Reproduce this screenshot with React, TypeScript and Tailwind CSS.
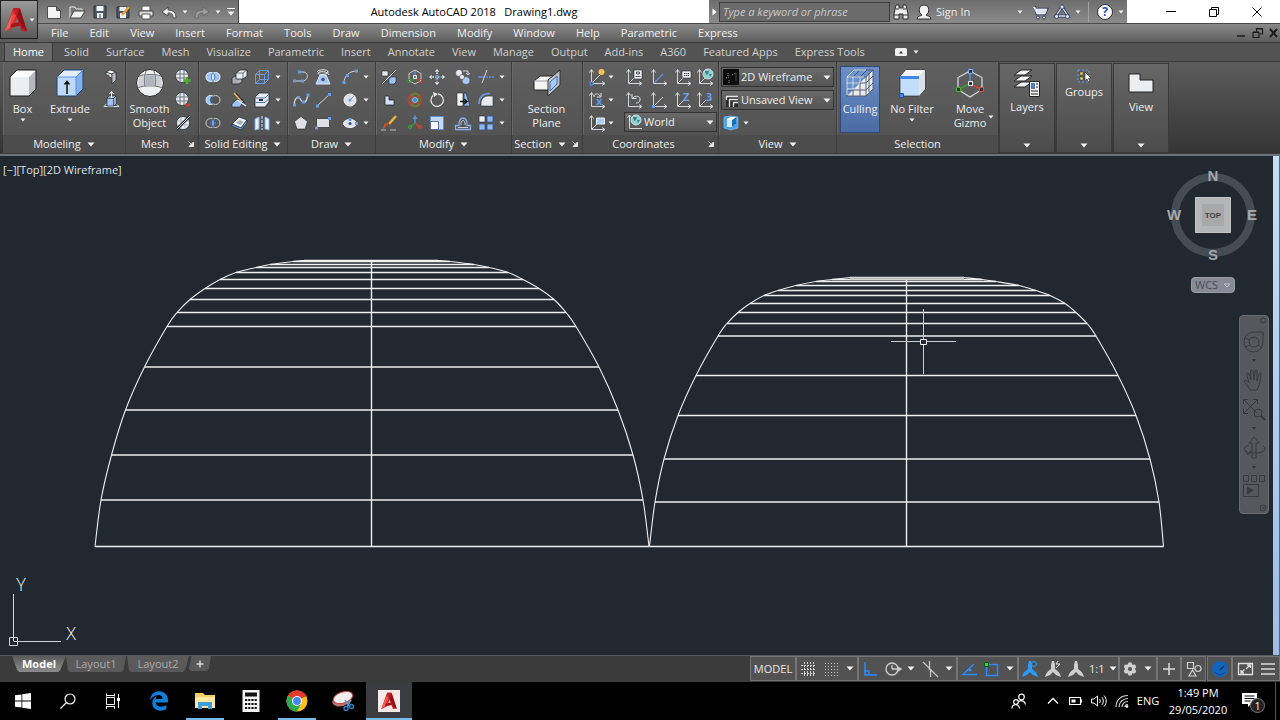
import React from 'react';
import clsx from 'clsx';
import { FaEdgeLegacy } from 'react-icons/fa6';
import { Settings } from 'lucide-react';

const MENUS = ['File', 'Edit', 'View', 'Insert', 'Format', 'Tools', 'Draw', 'Dimension', 'Modify', 'Window', 'Help', 'Parametric', 'Express'];

const TABS = ['Solid', 'Surface', 'Mesh', 'Visualize', 'Parametric', 'Insert', 'Annotate', 'View', 'Manage', 'Output', 'Add-ins', 'A360', 'Featured Apps', 'Express Tools'];

const LIGHT = '#e8ebf0';
const BLUE = '#9cc3f5';
const INK = '#222a35';
const AXIS = '#d2d5da';

interface SvgProps {
  w?: number;
  h?: number;
  children: React.ReactNode;
}

const Svg: React.FC<SvgProps> = ({ w = 20, h = 20, children }) => (
  <svg width={w} height={h} viewBox={`0 0 ${w} ${h}`} fill="none" className="block shrink-0" aria-hidden="true">
    {children}
  </svg>
);

const Caret: React.FC<{ size?: 'sm' | 'md' }> = ({ size = 'sm' }) =>
  size === 'sm' ? (
    <Svg w={6} h={4}>
      <path d="M0.5 0.5h5L3 3.5z" fill="#f2f2f2" />
    </Svg>
  ) : (
    <Svg w={8} h={5}>
      <path d="M0.5 0.5h7L4 4.5z" fill="#f2f2f2" />
    </Svg>
  );

const ucsAxes = <path d="M4.500 3v13.500h13M2.500 5.500l2-3 2 3M15 14.500l3 2-3 2" stroke={AXIS} />;

const globe = (cx: number, cy: number) => (
  <>
    <circle cx={cx} cy={cy} r="5" fill="#8fd0d6" stroke="#d8eef2" strokeWidth="0.800" />
    <path d={`M${cx - 3} ${cy - 3}l4 0-1 3-2 1zM${cx + 1} ${cy}l3 0-2 3z`} fill="#3f7f86" />
  </>
);

// small ribbon icons, drawn on a 20px grid
const icons: Record<string, React.ReactNode> = {
  polysolid: (
    <>
      <path d="M5 5l6 2v4l-3-1V8.500L5 7.500z" fill={LIGHT} stroke={INK} strokeWidth="0.700" />
      <path d="M5 5l4-2 6 2-4 2z" fill="#fff" stroke={INK} strokeWidth="0.700" />
      <path d="M11 7l4-2v8l-4 4z" fill="#b9bec6" stroke={INK} strokeWidth="0.700" />
    </>
  ),
  presspull: (
    <>
      <path d="M3 16.500h15l-2-2M3 16.500l3-3" stroke="#dfe5ee" />
      <path d="M6 8h7v8H6z" fill={BLUE} stroke={INK} strokeWidth="0.700" />
      <path d="M6 8l2-2h7l-2 2zM13 8l2-2v8l-2 2z" fill="#d8e8fb" stroke={INK} strokeWidth="0.700" />
      <path d="M10.500 8V2M8.500 4l2-2.500 2 2.500" stroke="#fff" />
    </>
  ),
  meshMore: (
    <>
      <circle cx="9" cy="9" r="6.500" fill={LIGHT} stroke={INK} strokeWidth="0.700" />
      <path d="M3 7h12M3 11h12M7 3v12M11 3v12" stroke="#6d7480" />
      <path d="M14 10v7M10.500 13.500h7" stroke="#4cae2c" strokeWidth="2.500" />
    </>
  ),
  meshLess: (
    <>
      <circle cx="9" cy="9" r="6.500" fill={LIGHT} stroke={INK} strokeWidth="0.700" />
      <path d="M3 7h12M3 11h12M7 3v12M11 3v12" stroke="#6d7480" />
      <path d="M12 15h5" stroke="#d9382a" strokeWidth="2.500" />
    </>
  ),
  meshRefine: (
    <>
      <circle cx="10" cy="10" r="6.500" fill={LIGHT} stroke={INK} strokeWidth="0.700" />
      <path d="M4 8h12M4 12h12M8 4v12M12 4v12" stroke="#b0b5bc" />
      <path d="M4 16L17 3" stroke={INK} strokeWidth="2.500" />
      <path d="M4 16L17 3" stroke="#d5d8dc" />
    </>
  ),
  union: (
    <>
      <circle cx="7.500" cy="10" r="4.500" fill={BLUE} stroke="#eef4ff" />
      <circle cx="12.500" cy="10" r="4.500" fill={BLUE} stroke="#eef4ff" />
      <ellipse cx="10" cy="10" rx="1.800" ry="3.500" fill="#d5e6fd" stroke="#4a79c4" />
    </>
  ),
  subtract: (
    <>
      <circle cx="7.500" cy="10" r="4.500" fill={BLUE} stroke="#dfeaff" />
      <circle cx="12.500" cy="10" r="4.500" fill="#555" stroke="#c8cbd0" />
      <path d="M9.500 6.500a4.500 4.500 0 0 0 0 7" stroke="#2d4d86" strokeWidth="1.500" />
    </>
  ),
  intersect: (
    <>
      <circle cx="7.500" cy="10" r="4.500" stroke="#c8cbd0" />
      <circle cx="12.500" cy="10" r="4.500" stroke="#c8cbd0" />
      <ellipse cx="10" cy="10" rx="2" ry="3.500" fill="#6ea6ee" stroke="#2d4d86" />
    </>
  ),
  extrudeFaces: (
    <>
      <path d="M3 11l3-2h7v6l-3 2H3z" fill="#a9adb4" stroke={INK} strokeWidth="0.800" />
      <path d="M7 6l4-3h7v6l-4 3H7z" fill={LIGHT} stroke={INK} strokeWidth="0.800" />
      <path d="M7 6h7v6M14 6l4-3" stroke={INK} strokeWidth="0.600" />
    </>
  ),
  slice: (
    <>
      <path d="M3 14l4-4h8l-4 7H3z" fill={BLUE} stroke={INK} strokeWidth="0.600" />
      <path d="M8 10l9 6" stroke="#dbe8fa" strokeWidth="1.500" />
      <path d="M5 3l7 8" stroke="#e5b65c" strokeWidth="1.500" />
      <path d="M7 3l9 10" stroke="#2c2c2c" />
    </>
  ),
  thicken: (
    <>
      <path d="M3 11l7-7 8 3-6 8z" fill="#f1f5fb" stroke={INK} strokeWidth="0.700" />
      <path d="M3 11l9 4 6-8v3l-6 7-9-4z" fill="#6ea6ee" stroke={INK} strokeWidth="0.700" />
      <path d="M7 10l3.500-3 4 1.500-3 3.500z" fill="#a5abb4" />
    </>
  ),
  extractEdges: (
    <path d="M3.500 7.500h9v9h-9zM3.500 7.500l4-4h9v9l-4 4M12.500 7.500l4-4M7.500 3.500v9h9M7.500 12.500l-4 4" stroke="#6c9be6" />
  ),
  imprint: (
    <>
      <path d="M3 7l4-4h10v9l-4 5H3z" fill={LIGHT} stroke={INK} strokeWidth="0.800" />
      <path d="M3 8h10l4-4M4 12.500h9l4-4" stroke="#4672bb" />
      <path d="M7 9h4v2H7z" fill={INK} />
    </>
  ),
  separate: (
    <>
      <path d="M3 6l4-2v12l-4 1zM13 4l4 2v11l-4-1z" fill="#e9f2ff" stroke="#7fadf0" />
      <path d="M10 3v14" stroke="#e4e4e4" strokeDasharray="3 1" />
    </>
  ),
  polyline: (
    <>
      <path d="M3 14h8c7 0 7-9 1-9H8" stroke={AXIS} />
      <path d="M2 12.500h3v3H2zM10 12.500h3v3h-3zM7 3.500h3v3H7z" fill="#6c9be6" />
    </>
  ),
  helix: (
    <>
      <path d="M4 5c1-3 11-3 11 0s-11 3-10 1 10-2 11 2" stroke="#e5e7ea" />
      <path d="M7 8h6l4 9H3z" fill="#a9c9f2" stroke="#dbe8fa" />
      <circle cx="10" cy="12.500" r="1.800" fill="#33598f" />
    </>
  ),
  arc: (
    <>
      <path d="M4 16C4 9 9 4 17 4" stroke={AXIS} />
      <path d="M2.500 14h3v3h-3zM6 7h3v3H6zM15 2.500h3v3h-3z" fill="#6c9be6" />
    </>
  ),
  spline: (
    <>
      <path d="M3 15C4 6 8 6 10 10s5 4 7-5" stroke={AXIS} strokeWidth="1.300" />
      <path d="M2 13.500h3v3H2zM6 6h3v3H6zM11 10.500h3v3h-3zM15.500 3.500h3v3h-3z" fill="#6c9be6" />
    </>
  ),
  line: (
    <>
      <path d="M4 16L17 4" stroke={AXIS} />
      <path d="M3 14.500h3v3H3zM15 3h3v3h-3z" fill="#6c9be6" />
    </>
  ),
  circle: (
    <>
      <circle cx="10" cy="10" r="6" fill="#dde0e5" stroke="#f6f7f9" />
      <path d="M10 10l4-4" stroke="#6c9be6" />
      <circle cx="10" cy="10" r="1.500" fill="#6c9be6" />
    </>
  ),
  polygon: <path d="M10 3.500l6.500 5-2.500 7.500H6L3.500 8.500z" fill="#dde0e5" stroke="#2a2a2a" strokeWidth="0.600" />,
  rectangle: (
    <>
      <path d="M3.500 5.500h13v9h-13z" fill="#dde0e5" stroke="#2a2a2a" strokeWidth="0.700" />
      <path d="M2 13.500h3v3H2zM15 4h3v3h-3z" fill="#6c9be6" />
    </>
  ),
  ellipse: (
    <>
      <ellipse cx="10" cy="10.500" rx="6.500" ry="4" fill="#dde0e5" stroke="#f6f7f9" />
      <circle cx="10" cy="10.500" r="1.500" fill="#2b4f8f" />
      <path d="M8.500 5h3v3h-3zM15 9h3v3h-3z" fill="#6c9be6" />
    </>
  ),
  move3d: (
    <>
      <path d="M3 4h6v5H3z" fill={LIGHT} stroke={INK} strokeWidth="0.600" />
      <path d="M3 17L17 3" stroke="#e2e4e8" />
      <path d="M10 12l2-2h5v5l-2 2h-5z" fill={BLUE} stroke={INK} strokeWidth="0.600" />
    </>
  ),
  gizmoMove: (
    <>
      <path d="M10 3l6 3.500v7L10 17l-6-3.500v-7z" stroke="#c9ccd1" />
      <path d="M10 10V4" stroke="#5b8fe0" strokeWidth="1.500" />
      <path d="M10 10l-5 3.500M3 12.500h3v3H3z" stroke="#3c9a35" />
      <path d="M10 10l5 3.500M14 12.500h3v3h-3z" stroke="#d1442f" />
      <path d="M8.500 8.500h3v3h-3z" stroke="#eee" />
    </>
  ),
  move: (
    <>
      <path d="M10 3v14M3 10h14" stroke="#e8eaee" strokeWidth="1.500" strokeDasharray="4 1.500" />
      <path d="M10 1.500l3 3.500H7zM10 18.500l3-3.500H7zM1.500 10L5 7v6zM18.500 10L15 7v6z" fill="#f0f2f5" stroke={INK} strokeWidth="0.500" />
      <path d="M8.500 8.500h3v3h-3z" fill="#6c9be6" />
    </>
  ),
  copy: (
    <>
      <circle cx="6" cy="6" r="3.500" fill={LIGHT} stroke={INK} strokeWidth="0.500" />
      <circle cx="13" cy="13.500" r="4" fill="#a9c9f2" stroke={INK} strokeWidth="0.500" />
      <circle cx="9" cy="10" r="2.500" fill={LIGHT} stroke={INK} strokeWidth="0.500" />
      <path d="M10 4h5v3M13 6l2 2 2-2" stroke={AXIS} />
    </>
  ),
  trim: (
    <>
      <path d="M2 10h6" stroke="#5b8fe0" strokeWidth="1.500" />
      <path d="M10 10h8" stroke="#5b8fe0" strokeWidth="1.500" strokeDasharray="2 1" />
      <path d="M6 16l5-13" stroke={AXIS} />
    </>
  ),
  smallSolid: <path d="M6 6h4v4h5v5H6z" fill="#d5e3f7" stroke={INK} strokeWidth="0.800" />,
  gizmoRotate: (
    <>
      <circle cx="10" cy="10" r="6.500" stroke="#d1442f" strokeWidth="1.500" />
      <ellipse cx="10" cy="10" rx="3.500" ry="6.500" stroke="#3c9a35" strokeWidth="1.500" />
      <ellipse cx="10" cy="10" rx="7" ry="3.500" stroke="#a04a42" strokeWidth="1.500" />
      <circle cx="10" cy="10" r="2.500" fill="#4b83da" stroke="#cfe0fa" strokeWidth="0.600" />
    </>
  ),
  rotate: (
    <>
      <path d="M11 4a6.200 6.200 0 1 1-5 1.500" stroke="#e3e5e9" strokeWidth="1.300" />
      <path d="M6 2l5 2-4 3z" fill="#e3e5e9" />
    </>
  ),
  mirror: (
    <>
      <path d="M4 3h6v13H4z" fill="#f6f7f9" stroke={INK} strokeWidth="0.600" />
      <path d="M11 3h2l4 13h-6z" fill="#8fb8f0" stroke={INK} strokeWidth="0.600" />
      <path d="M7 11.500h6M11 9l3 2.500-3 2.500" stroke="#111" strokeWidth="1.500" />
    </>
  ),
  fillet: (
    <>
      <path d="M5 16v-3c0-4 3-7 7-7h5v10z" fill={LIGHT} stroke={INK} strokeWidth="0.600" />
      <path d="M3 14C3 7 7 3.500 14 3.500" stroke="#6c9be6" strokeWidth="1.600" />
    </>
  ),
  erase: (
    <>
      <path d="M17 3l-7 8" stroke="#f0b43c" strokeWidth="2.500" />
      <path d="M10 10l-6 6 2-5z" fill="#c8501e" stroke="#c8501e" />
      <path d="M2 17h5M11 17h6" stroke="#b9bcc2" />
    </>
  ),
  gizmoScale: (
    <>
      <path d="M10 10V5" stroke="#5b8fe0" strokeWidth="1.500" />
      <path d="M10 2l2.500 4h-5z" fill="#5b8fe0" />
      <path d="M10 10l-6 5" stroke="#3c9a35" strokeWidth="1.500" />
      <circle cx="5" cy="14" r="1.800" stroke="#3c9a35" />
      <path d="M10 10l6 5" stroke="#d1442f" strokeWidth="1.500" />
      <circle cx="15" cy="14" r="1.800" stroke="#d1442f" />
    </>
  ),
  scale: (
    <>
      <path d="M3.500 3.500h13v13h-13z" fill="#c2d8f7" stroke="#5d8fd8" />
      <path d="M3.500 8.500h8v8h-8z" fill="#f6f8fb" stroke="#5d7296" />
    </>
  ),
  offset: (
    <>
      <path d="M2.500 16.500h15v-4H14c1-10-9-10-8 0H2.500z" stroke="#86b0ee" strokeWidth="1.300" />
      <path d="M5 14.500h10M8 12c-1-6 5-6 4 0" stroke="#c9ccd1" />
    </>
  ),
  array: (
    <>
      <path d="M3 3h6v6H3z" fill={LIGHT} stroke={INK} strokeWidth="0.600" />
      <path d="M11 3h6v6h-6zM3 11h6v6H3zM11 11h6v6h-6z" fill="#8fb8f2" stroke="#31528b" strokeWidth="0.800" />
    </>
  ),
  ucsOrigin: (
    <>
      {ucsAxes}
      <path d="M5 16l8-8" stroke={AXIS} />
      <path d="M3 15h3v3H3z" fill="#2b4f8f" stroke="#6c9be6" />
      <circle cx="14.500" cy="5" r="3" fill="#ffc24a" />
    </>
  ),
  ucsView: (
    <>
      {ucsAxes}
      <path d="M5 16l5-5" stroke={AXIS} />
      <path d="M10 3h8v9h-8z" fill="#f3f5f8" stroke={INK} strokeWidth="0.600" />
      <path d="M12.500 5h3v2h-3zM11.500 9.500h5" stroke={INK} strokeWidth="0.800" />
    </>
  ),
  ucsDiag: (
    <>
      {ucsAxes}
      <path d="M5 16l9-9" stroke="#5b8fe0" strokeWidth="1.300" />
    </>
  ),
  ucsNamed: (
    <>
      {ucsAxes}
      <path d="M5 16l5-5" stroke={AXIS} />
      <path d="M9 4h9v7H9z" fill="#f3f5f8" stroke={INK} strokeWidth="0.600" />
      <path d="M11 6.500h5M11 8.500h5" stroke={INK} strokeWidth="0.900" strokeDasharray="1.500 0.500" />
    </>
  ),
  ucsWorld: (
    <>
      {ucsAxes}
      <path d="M5 16l5-5" stroke={AXIS} />
      {globe(13, 7)}
    </>
  ),
  ucsX: (
    <>
      {ucsAxes}
      <path d="M7 7c0-4 5-4 6-1M14 3v4h-4" stroke="#dfe2e6" />
      <text x="9" y="15" fontSize="11" fontWeight="700" fill="#5b9bf5">x</text>
    </>
  ),
  ucsPrevious: (
    <>
      {ucsAxes}
      <path d="M9 8c2-3 8-2 7 2 0 2-2 3-4 3M8 4v4.500h4.500" stroke="#dfe2e6" />
    </>
  ),
  ucsFace: (
    <>
      {ucsAxes}
      <path d="M5 16l9-9" stroke={AXIS} />
      <path d="M3 15h3v3H3z" fill="#5b9bf5" />
    </>
  ),
  ucsZ: (
    <>
      {ucsAxes}
      <path d="M5 16l6-6" stroke={AXIS} />
      <text x="10" y="11" fontSize="11" fontWeight="700" fill="#6c9ff0">Z</text>
    </>
  ),
  ucs3: (
    <>
      {ucsAxes}
      <path d="M5 16l6-6" stroke={AXIS} />
      <text x="11" y="11" fontSize="11" fontWeight="700" fill="#6c9ff0">3</text>
    </>
  ),
  ucsObject: (
    <>
      {ucsAxes}
      <path d="M5 16l5-5" stroke={AXIS} />
      <path d="M9.500 5h8v6h-8z" fill="#a9cdf5" stroke="#e9f1fb" />
    </>
  ),
  cube: (
    <>
      <path d="M3 4l7-1 7 1v11l-7 2-7-2z" fill="#4aa3ea" stroke="#8fcaf5" strokeWidth="0.600" />
      <path d="M6 6l4-2h5v7l-4 3H6z" fill="#d3e9fb" />
      <path d="M11 7l4-3v7l-4 3z" fill="#1f6fb8" />
      <path d="M6 6l4-2h5l-4 3H6z" fill="#fff" />
    </>
  ),
};

const IconButton: React.FC<{ name: string }> = ({ name }) => (
  <button type="button" aria-label={name} className="h-[22px] w-5">
    <Svg>{icons[name]}</Svg>
  </button>
);

const CaretButton: React.FC = () => (
  <button type="button" aria-label="More" className="flex h-[22px] w-[10px] items-center justify-center">
    <Caret />
  </button>
);

interface IconGridProps {
  columns: string;
  items: string[];
  children?: React.ReactNode;
}

// an item named '' draws the small flyout arrow
const IconGrid: React.FC<IconGridProps> = ({ columns, items, children }) => (
  <div className={clsx('grid content-start justify-items-start gap-y-px', columns)}>
    {items.map((name, i) => (name ? <IconButton key={i} name={name} /> : <CaretButton key={i} />))}
    {children}
  </div>
);

interface PanelProps {
  title: string;
  width: string;
  menu?: boolean;
  launcher?: boolean;
  children: React.ReactNode;
}

const Panel: React.FC<PanelProps> = ({ title, width, menu, launcher, children }) => (
  <section className={clsx('flex shrink-0 flex-col border-r border-[#3d3d3d] shadow-[inset_1px_0_0_#676767]', width)}>
    <div className="flex flex-1 items-start pt-1">{children}</div>
    <div className="flex h-[18px] items-center bg-[#4c4c4c]">
      <button type="button" className="flex flex-1 items-center justify-center gap-[6px] whitespace-nowrap">
        {title}
        {menu && <Caret size="md" />}
      </button>
      {launcher && (
        <button type="button" aria-label={`${title} settings`} className="flex w-[14px] justify-center">
          <Svg w={6} h={6}>
            <path d="M0.500 0.500l3 3M5.500 1v4.500H1z" stroke="#e8e8e8" fill="#e8e8e8" />
          </Svg>
        </button>
      )}
    </div>
  </section>
);

interface BigButtonProps {
  label: string[];
  width: string;
  caret?: boolean;
  active?: boolean;
  children: React.ReactNode;
}

const BigButton: React.FC<BigButtonProps> = ({ label, width, caret, active, children }) => (
  <button
    type="button"
    className={clsx(
      'flex h-[67px] shrink-0 flex-col items-center',
      width,
      active ? 'border border-[#2f4a7a] bg-gradient-to-b from-[#6d8fc7] to-[#4a6ba3] pt-px' : 'pt-[2px]',
    )}
  >
    <Svg w={30} h={30}>{children}</Svg>
    <span className="mt-1 leading-[14px] whitespace-nowrap">
      {label.map((line) => (
        <span key={line} className="block">
          {line}
        </span>
      ))}
    </span>
    {caret && (
      <span className="mt-[2px]">
        <Caret />
      </span>
    )}
  </button>
);

interface ComboProps {
  label: string;
  value: string;
  options: string[];
  className: string;
  children: React.ReactNode;
}

const Combo: React.FC<ComboProps> = ({ label, value, options, className, children }) => (
  <div className={clsx('relative border border-[#333] bg-gradient-to-b from-[#6a6a6a] to-[#555]', className)}>
    <select
      aria-label={label}
      defaultValue={value}
      className="block h-full w-full appearance-none bg-transparent pl-[19px] text-[11px] text-[#ededed] outline-none"
    >
      {options.map((o) => (
        <option key={o}>{o}</option>
      ))}
    </select>
    <span className="pointer-events-none absolute inset-y-0 left-px flex items-center">{children}</span>
    <span className="pointer-events-none absolute inset-y-0 right-[2px] flex items-center">
      <Caret size="md" />
    </span>
  </div>
);

const CollapsedPanel: React.FC<{ label: string; icon: React.ReactNode }> = ({ label, icon }) => (
  <button
    type="button"
    className="flex w-14 shrink-0 flex-col items-center border border-[#3a3a3a] bg-gradient-to-b from-[#676767] to-[#4b4b4b] pt-1"
  >
    {icon}
    <span>{label}</span>
    <span className="mt-auto pb-[4px]">
      <Caret size="md" />
    </span>
  </button>
);

const AcadLogo: React.FC<{ size: number }> = ({ size }) => (
  <svg width={size} height={size} viewBox="0 0 26 28" className="shrink-0" aria-hidden="true">
    <path d="M10 1h6l1 6-8 16-7 3H1z" fill="#d4282e" />
    <path d="M10 1h7l8 25h-6L13 9z" fill="#c01e25" />
    <path d="M13 9l-4 9 8-2 3 4-10 1-8 5 8-19z" fill="#ea4a44" />
    <path d="M17 1l8 25-5-3-6-13z" fill="#8f1218" />
    <path d="M8 18l10-2 1 4-12 2z" fill="#a3161c" />
    <path d="M1 26L10 4l-4 18z" fill="#f0645c" />
  </svg>
);

const QuickAccess: React.FC = () => {
  const tools: [string, React.ReactNode][] = [
    ['New', <path key="n" d="M3.500 4.500h9l4 4v8h-13zM12.500 4.500v4h4" fill="#f4f4f4" stroke="#4d4d4d" />],
    [
      'Open',
      <g key="o">
        <path d="M3 16V5h5l1 2h6v2" stroke="#ececec" fill="#777" />
        <path d="M3 16l4-7h11l-4 7z" fill="#efefef" stroke="#444" />
      </g>,
    ],
    [
      'Save',
      <g key="s">
        <path d="M4 4h12v12H4z" fill="#4c5564" stroke="#2b3038" />
        <path d="M6.500 4h7v5h-7zM7 11h6v5H7z" fill="#f1f1f1" />
        <path d="M9 12h2v4H9z" fill="#8298bb" />
      </g>,
    ],
    [
      'Save As',
      <g key="sa">
        <path d="M4 5h12v11H4z" fill="#4c5564" stroke="#2b3038" />
        <path d="M6.500 5h7v4h-7zM7 11h6v5H7z" fill="#f1f1f1" />
        <path d="M9 13l7-8" stroke="#e8a33a" strokeWidth="2.500" />
      </g>,
    ],
    [
      'Plot',
      <g key="p">
        <path d="M6 4h8v5H6z" fill="#fafafa" stroke="#555" />
        <path d="M3 9h14v5H3z" fill="#dedede" stroke="#444" />
        <path d="M6 12h8v5H6z" fill="#fff" stroke="#555" />
      </g>,
    ],
    ['Undo', <path key="u" d="M3 10l6-5v3c6 0 8 3 8 8h-3c0-4-1-5-5-5v3z" fill="#efefef" stroke="#4a4a4a" />],
  ];
  return (
    <div className="flex h-[23px] items-center border-r border-[#444] bg-gradient-to-b from-[#6d6d6d] to-[#8b8b8b] pl-1">
      {tools.map(([name, art]) => (
        <button key={name} type="button" aria-label={name} className="flex w-[23px] justify-center">
          <Svg>{art}</Svg>
        </button>
      ))}
      <CaretButton />
      <button type="button" aria-label="Redo" className="flex w-[23px] justify-center">
        <Svg>
          <path d="M17 10l-6-5v3c-6 0-8 3-8 8h3c0-4 1-5 5-5v3z" fill="#9d9d9d" stroke="#6a6a6a" />
        </Svg>
      </button>
      <CaretButton />
      <button type="button" aria-label="Customize toolbar" className="flex w-[15px] flex-col items-center gap-[2px]">
        <span className="h-px w-2 bg-white" />
        <Caret size="md" />
      </button>
    </div>
  );
};

const InfoCenter: React.FC = () => (
  <div className="flex h-[23px] w-[418px] shrink-0 items-center bg-gradient-to-b from-[#6d6d6d] to-[#8b8b8b]">
    <button type="button" aria-label="Toggle search" className="flex h-full w-[10px] items-center justify-center">
      <Svg w={5} h={8}>
        <path d="M0.500 0.500v7L4.500 4z" fill="#fff" />
      </Svg>
    </button>
    <input
      aria-label="Search"
      placeholder="Type a keyword or phrase"
      className="h-[20px] w-[171px] border border-[#3c3c3c] bg-[#6b6b6b] px-[3px] text-[11px] italic outline-none placeholder:text-[#c9c9c9]"
    />
    <button type="button" aria-label="Find" className="flex w-[22px] justify-center">
      <Svg>
        <path d="M5 3h3v3h4V3h3l2 9v5h-5v-5H8v5H3v-5z" fill="#ececec" stroke="#2c2c2c" />
        <path d="M5 7h3M12 7h3M3 13h5M12 13h5" stroke="#2c2c2c" />
      </Svg>
    </button>
    <button type="button" className="flex items-center gap-[2px] pl-[2px] text-[11px] text-[#ececec]">
      <Svg>
        <path d="M3 17c0-3 4-3 5-4-4-2-4-10 2-10s6 8 2 10c1 1 5 1 5 4z" fill="#f2f2f2" stroke="#2c2c2c" />
      </Svg>
      Sign In
    </button>
    <span className="ml-auto">
      <CaretButton />
    </span>
    <button type="button" aria-label="App Store" className="ml-1 flex w-[22px] justify-center">
      <Svg>
        <path d="M3 5h2l2 7h8l2-5H6" stroke="#2f3560" strokeWidth="2.500" />
        <path d="M3 5h2l2 7h8l2-5H6l1 5" fill="#dfe3f5" stroke="#eef0fa" strokeWidth="0.800" />
        <circle cx="8" cy="15.500" r="1.500" fill="#e6e9f8" stroke="#2f3560" />
        <circle cx="14" cy="15.500" r="1.500" fill="#e6e9f8" stroke="#2f3560" />
      </Svg>
    </button>
    <button type="button" aria-label="Connect" className="flex w-[22px] justify-center">
      <Svg>
        <path d="M10 5l6 9H4z" stroke="#2f3560" strokeWidth="3" />
        <path d="M10 5l6 9H4z" stroke="#dfe3f5" strokeWidth="1.300" />
        <circle cx="10" cy="5" r="2" fill="#dfe3f5" stroke="#2f3560" strokeWidth="0.800" />
        <circle cx="4.500" cy="14.500" r="2" fill="#dfe3f5" stroke="#2f3560" strokeWidth="0.800" />
        <circle cx="15.500" cy="14.500" r="2" fill="#dfe3f5" stroke="#2f3560" strokeWidth="0.800" />
      </Svg>
    </button>
    <CaretButton />
    <span className="mx-[5px] h-5 w-px bg-[#a0a0a0]" />
    <button type="button" aria-label="Help" className="flex w-[22px] justify-center">
      <span className="flex size-4 items-center justify-center rounded-full border border-[#30343c] bg-white text-[12px] font-bold text-[#1d4fc0]">
        ?
      </span>
    </button>
    <span className="mr-px">
      <CaretButton />
    </span>
  </div>
);

const WindowControls: React.FC = () => (
  <div className="flex h-[23px] shrink-0 items-center bg-white pr-[2px] pl-[22px] text-black">
    <button type="button" aria-label="Minimize" className="flex h-full w-[43px] items-center justify-center">
      <Svg w={10} h={10}>
        <path d="M0 4.500h10" stroke="currentColor" />
      </Svg>
    </button>
    <button type="button" aria-label="Restore" className="flex h-full w-[43px] items-center justify-center">
      <Svg w={10} h={10}>
        <path d="M0.500 2.500h7v7h-7zM2.500 2.500v-2h7v7h-2" stroke="currentColor" />
      </Svg>
    </button>
    <button type="button" aria-label="Close" className="flex h-full w-[43px] items-center justify-center">
      <Svg w={10} h={10}>
        <path d="M0.500 0.500l9 9M9.500 0.500l-9 9" stroke="currentColor" />
      </Svg>
    </button>
  </div>
);

const Header: React.FC = () => (
  <header className="flex h-[42px] bg-[#5c5c5c]">
    <button
      type="button"
      aria-label="Application menu"
      className="flex h-[39px] w-[38px] shrink-0 items-center border border-[#222] bg-gradient-to-b from-[#9a9a9a] to-[#5a5a5a] pl-[2px]"
    >
      <AcadLogo size={26} />
      <Caret />
    </button>
    <div className="min-w-0 flex-1">
      <div className="flex h-[23px] items-center bg-white">
        <QuickAccess />
        <h1 className="flex-1 text-center text-[11px] whitespace-pre text-black">Autodesk AutoCAD 2018   Drawing1.dwg</h1>
        <InfoCenter />
        <WindowControls />
      </div>
      <nav className="flex h-[19px] items-center justify-between border-t border-[#4a4a4a] bg-gradient-to-b from-[#8a8a8a] to-[#5e5e5e] pl-[13px] text-[#f0f0f0]">
        <div className="flex w-[687px] justify-between">
          {MENUS.map((m) => (
            <button key={m} type="button">
              {m}
            </button>
          ))}
        </div>
        <span className="flex gap-1 text-[#1d1d1d]">
          <button type="button" aria-label="Minimize drawing">
            <Svg w={12} h={12}>
              <path d="M1 9h8" stroke="currentColor" strokeWidth="1.500" />
            </Svg>
          </button>
          <button type="button" aria-label="Restore drawing">
            <Svg w={12} h={12}>
              <path d="M1 5.500h6v5H1zM4.500 5V1.500h6V7H8M4 2h7M1 5h6" stroke="currentColor" strokeWidth="1.200" />
            </Svg>
          </button>
          <button type="button" aria-label="Close drawing">
            <Svg w={12} h={12}>
              <path d="M2 2l7 8M9 2l-7 8" stroke="currentColor" strokeWidth="2" />
            </Svg>
          </button>
        </span>
      </nav>
    </div>
  </header>
);

const RibbonTabs: React.FC = () => (
  <div className="flex h-[19px] items-stretch gap-[17px] border-t border-[#3a3a3a] bg-[#535353] pl-1 text-[#d0d0d0]">
    <button type="button" className="-mr-[6px] w-[49px] border-x border-[#3a3a3a] bg-[#686868] text-white">
      Home
    </button>
    {TABS.map((t) => (
      <button key={t} type="button">
        {t}
      </button>
    ))}
    <button type="button" aria-label="Minimize ribbon" className="ml-[13px] flex items-center gap-[6px]">
      <Svg w={12} h={8}>
        <rect width="12" height="8" rx="1.500" fill="#f0f0f0" />
        <path d="M4 5.500L6 3l2 2.500z" fill="#333" />
      </Svg>
      <Caret />
    </button>
  </div>
);

const Ribbon: React.FC = () => (
  <div className="flex h-[93px] border-y border-[#3a3a3a] bg-gradient-to-b from-[#5c5c5c] to-[#353535] pl-[3px] text-[#ededed]">
    <div className="flex bg-gradient-to-b from-[#606060] to-[#505050]">
      <Panel title="Modeling" width="w-[123px]" menu>
        <BigButton label={['Box']} width="w-[39px]" caret>
          <path d="M2 9l7-7h19v19l-7 7H2z" fill="#eceef1" />
          <path d="M21 9l7-7v19l-7 7z" fill="#b4b8bf" />
          <path d="M2 9l7-7h19l-7 7z" fill="#fbfbfc" />
          <path d="M2 9l7-7h19v19l-7 7H2z" stroke="#1f1f1f" />
        </BigButton>
        <BigButton label={['Extrude']} width="w-14" caret>
          <path d="M2 9l7-7h19v19l-7 7H2z" fill="#bcd9f8" />
          <path d="M21 9l7-7v19l-7 7z" fill="#82b0ea" />
          <path d="M2 9l7-7h19l-7 7z" fill="#e2effd" />
          <path d="M2 9l7-7h19v19l-7 7H2z" stroke="#1c4379" />
          <path d="M2 9h19v19M21 9l7-7" stroke="#5d93df" />
          <path d="M12 26V14M9.500 16.500l2.500-3 2.500 3" stroke="#111" strokeWidth="1.500" />
        </BigButton>
        <span className="pl-[3px]">
          <IconGrid columns="grid-cols-[20px]" items={['polysolid', 'presspull']} />
        </span>
      </Panel>
      <Panel title="Mesh" width="w-[73px]" launcher>
        <BigButton label={['Smooth', 'Object']} width="w-[47px]">
          <circle cx="15" cy="15" r="13.500" fill="#eef0f2" stroke="#2a2a2a" />
          <path d="M4 8c3-1 19-1 22 0l1 12c-5-2-19-2-24 0z" fill="#cdd1d6" />
          <path d="M4 8c5-2 17-2 22 0M3 20c5-3 19-3 24 0M11 3c-2 7-2 10-1 15M19 3c2 7 2 10 1 15" stroke="#6f757e" />
          <path d="M10.500 7.500h9v11h-9z" fill="#b1b6be" />
        </BigButton>
        <IconGrid columns="grid-cols-[20px]" items={['meshMore', 'meshLess', 'meshRefine']} />
      </Panel>
      <Panel title="Solid Editing" width="w-[89px]" menu>
        <span className="pl-1">
          <IconGrid
            columns="grid-cols-[26px_23px_21px_10px]"
            items={['union', 'extrudeFaces', 'extractEdges', '', 'subtract', 'slice', 'imprint', '', 'intersect', 'thicken', 'separate', '']}
          />
        </span>
      </Panel>
      <Panel title="Draw" width="w-[88px]" menu>
        <span className="pl-[3px]">
          <IconGrid
            columns="grid-cols-[22px_27px_21px_10px]"
            items={['polyline', 'helix', 'arc', '', 'spline', 'line', 'circle', '', 'polygon', 'rectangle', 'ellipse', '']}
          />
        </span>
      </Panel>
      <Panel title="Modify" width="w-[136px]" menu>
        <span className="pl-[3px]">
          <IconGrid
            columns="grid-cols-[26px_22px_26px_23px_21px_10px]"
            items={[
              'move3d', 'gizmoMove', 'move', 'copy', 'trim', '',
              'smallSolid', 'gizmoRotate', 'rotate', 'mirror', 'fillet', '',
              'erase', 'gizmoScale', 'scale', 'offset', 'array', '',
            ]}
          />
        </span>
      </Panel>
      <Panel title="Section" width="w-[71px]" menu launcher>
        <BigButton label={['Section', 'Plane']} width="w-[69px]">
          <path d="M2 13l6-5h14v11l-3 3H2z" fill="#f4f5f7" stroke="#222" />
          <path d="M2 13h16v9M18 13l4-5" stroke="#9aa0a8" />
          <path d="M16 12L28 2v15L16 28z" fill="#c9cdd4" fillOpacity="0.900" stroke="#2f2f2f" />
          <path d="M18 14l7-6v8l-7 7z" fill="#a7ccf8" stroke="#3b66ad" />
        </BigButton>
      </Panel>
      <Panel title="Coordinates" width="w-[136px]" launcher>
        <span className="pl-1">
          <IconGrid
            columns="grid-cols-[19px_18px_25px_24px_22px_20px]"
            items={[
              'ucsOrigin', '', 'ucsView', 'ucsDiag', 'ucsNamed', 'ucsWorld',
              'ucsX', '', 'ucsPrevious', 'ucsFace', 'ucsZ', 'ucs3',
              'ucsObject', '',
            ]}
          >
            <Combo label="Named UCS" value="World" options={['World', 'Unnamed']} className="col-span-4 h-5 w-[93px]">
              <Svg w={17} h={18}>
                <path d="M3.500 2v13.500H16M1.500 4.500l2-2.500 2 2.500" stroke={AXIS} />
                {globe(10, 7)}
              </Svg>
            </Combo>
          </IconGrid>
        </span>
      </Panel>
      <Panel title="View" width="w-[118px]" menu>
        <div className="flex flex-1 flex-col gap-[3px] px-[2px] pt-px">
          <Combo label="Visual style" value="2D Wireframe" options={['2D Wireframe', 'Realistic', 'Conceptual']} className="h-5">
            <Svg w={16} h={16}>
              <rect width="16" height="16" fill="#0c0c0c" />
              <path d="M5 4v4M6 11v3M9 6l4-2v8M3 9l3-1" stroke="#8d8d8d" strokeDasharray="1 1" />
            </Svg>
          </Combo>
          <Combo label="Named view" value="Unsaved View" options={['Unsaved View', 'Top', 'Front']} className="h-5">
            <Svg w={16} h={16}>
              <path d="M3 4h12v11H3z" fill="#2b2b2b" />
              <path d="M3 4.500h12M3.500 4v4M6 7.500h9M6.500 7v8M10.500 15v-4.500H15" stroke="#e8e8e8" strokeWidth="1.300" />
            </Svg>
          </Combo>
          <div className="flex h-5 items-center">
            <IconButton name="cube" />
            <CaretButton />
          </div>
        </div>
      </Panel>
      <Panel title="Selection" width="w-[162px]">
        <span className="w-[3px]" />
        <BigButton label={['Culling']} width="w-10" active>
          <path d="M2 9l7-7h19v19l-7 7H2z" fill="#6f9fe4" fillOpacity="0.400" />
          <path d="M2 28L21 9l7-7v19l-7 7z" fill="#e9ebee" />
          <path d="M2 9h19v19H2zM2 9l7-7h19l-7 7M28 2v19l-7 7M8 9v19M15 9v19M2 15h19l7-7M2 22h19l7-7M8 9l7-7M15 9l7-7M24 5v19" stroke="#4a5566" strokeWidth="0.900" />
          <path d="M2 9h17M2 15h13M2 21h7M2 9v18M8 9v12M15 9v6M2 9l7-7h12" stroke="#dceaff" />
        </BigButton>
        <BigButton label={['No Filter']} width="w-16" caret>
          <path d="M3 9l6-7h19v19l-6 7H3z" fill="#c3defa" stroke="#2a2a2a" strokeWidth="0.700" />
          <path d="M3 9l6-7h19l-6 7z" fill="#f6f7f9" />
          <path d="M22 9l6-7v19l-6 7z" fill="#dcdfe4" />
          <path d="M3 9.500h19" stroke="#3f86ea" strokeWidth="3" />
          <path d="M2.500 25.500h4v4h-4z" fill="#3f86ea" stroke="#1f4f9e" />
        </BigButton>
        <div className="relative">
          <BigButton label={['Move', 'Gizmo']} width="w-[52px]">
            <path d="M15 3l12 6.500v12L15 29 3 21.500v-12z" stroke="#d9dbdf" strokeWidth="1.200" />
            <path d="M15 15V6" stroke="#5b8fe0" strokeWidth="1.500" />
            <path d="M15 15L5 21" stroke="#3c9a35" strokeWidth="1.500" />
            <path d="M15 15l10 6" stroke="#d1442f" strokeWidth="1.500" />
            <path d="M13.500 1.500h4v4h-4z" stroke="#7fadf0" fill="#333" />
            <path d="M1.500 19.500h4v4h-4z" stroke="#4cae2c" fill="#333" />
            <path d="M24.500 19.500h4v4h-4z" stroke="#e2532d" fill="#333" />
            <path d="M13.500 13.500h4v4h-4z" stroke="#fff" fill="#333" />
          </BigButton>
          <span className="absolute top-[49px] right-[2px]">
            <Caret />
          </span>
        </div>
      </Panel>
    </div>
    <div className="flex gap-px pt-px">
      <CollapsedPanel
        label="Layers"
        icon={
          <Svg w={28} h={31}>
            <path d="M1 7l7-5h11l-7 5zM1 13l7-5h11l-7 5zM1 19l7-5h11l-7 5z" fill="#f3f4f6" stroke="#222" />
            <path d="M16.500 13.500h10v15h-10z" fill="#f3f4f6" stroke="#222" />
            <path d="M18.500 15.500h3v5h-3z" fill="#3f86ea" stroke="#222" strokeWidth="0.500" />
            <path d="M23 16h2M23 19h2M18 23h7M18 26h7" stroke="#222" />
          </Svg>
        }
      />
      <CollapsedPanel
        label="Groups"
        icon={
          <Svg w={16} h={16}>
            <path d="M2 2h11v12H2z" stroke="#5b9bf5" strokeDasharray="2 2" />
            <path d="M4 4h3v3H4zM4 9h3v3H4z" fill="#f2e27a" stroke="#222" strokeWidth="0.500" />
            <path d="M9 4l6 6-2.500 0.500 1.500 3-1.500 0.500-1.500-3-2 1.500z" fill="#fff" stroke="#222" strokeWidth="0.600" />
          </Svg>
        }
      />
      <CollapsedPanel
        label="View"
        icon={
          <Svg w={28} h={31}>
            <path d="M2 6h11v6h13v12H2z" fill="#eceef1" stroke="#222" />
          </Svg>
        }
      />
    </div>
  </div>
);

interface Level {
  y: number;
  x1: number;
  x2: number;
}

const toLevels = (rows: number[][]): Level[] => rows.map(([y, x1, x2]) => ({ y, x1, x2 }));

// horizontal sections of the two domes, from the top down
const LEFT_DOME = toLevels([
  [260.5, 304, 438],
  [261.5, 293, 450],
  [264.5, 270, 474],
  [267.5, 256, 489],
  [272.5, 236, 508],
  [279.5, 220, 523],
  [288.5, 205, 539],
  [299.5, 190, 554],
  [312.5, 177, 566],
  [326.5, 167, 576],
  [367, 144.5, 599],
  [410, 125.5, 618],
  [455, 111.5, 633],
  [500, 101, 643],
  [546.5, 95, 649],
]);

const RIGHT_DOME = toLevels([
  [277.5, 850, 964],
  [279.5, 832, 982],
  [281.5, 816, 996],
  [285.5, 796, 1019],
  [290.5, 778, 1036],
  [295.5, 764, 1050],
  [303.5, 750, 1065],
  [312.5, 738, 1076],
  [323.5, 727, 1087],
  [336, 718, 1096],
  [375.5, 696, 1118],
  [415.5, 678, 1136],
  [459, 664, 1150],
  [502, 655, 1159],
  [546.5, 649.5, 1163.5],
]);

const outline = (levels: Level[]) => {
  const left = [...levels].reverse().map((l) => [l.x1, l.y]);
  const right = levels.map((l) => [l.x2, l.y]);
  // the curve stops at the flat top and picks up again on the other side
  const side = (pts: number[][]) => {
    let d = `M${pts[0][0]} ${pts[0][1]}`;
    for (let i = 0; i < pts.length - 1; i++) {
      const a = pts[Math.max(i - 1, 0)];
      const b = pts[i];
      const c = pts[i + 1];
      const e = pts[Math.min(i + 2, pts.length - 1)];
      d += `C${b[0] + (c[0] - a[0]) / 6} ${b[1] + (c[1] - a[1]) / 6} ${c[0] - (e[0] - b[0]) / 6} ${c[1] - (e[1] - b[1]) / 6} ${c[0]} ${c[1]}`;
    }
    return d;
  };
  return side(left) + side(right);
};

const Dome: React.FC<{ levels: Level[]; axis: number }> = ({ levels, axis }) => (
  <g stroke="#edeff1" fill="none">
    <path d={outline(levels)} strokeWidth="1.100" />
    {levels.map((l) => (
      <path key={l.y} d={`M${l.x1} ${l.y}H${l.x2}`} strokeWidth="1.400" />
    ))}
    <path d={`M${axis} ${levels[0].y}V546.500`} strokeWidth="1.400" />
  </g>
);

const NavCaret: React.FC = () => (
  <Svg w={4} h={3}>
    <path d="M0 0h4L2 3z" fill="#2f3337" />
  </Svg>
);

const NavBar: React.FC = () => (
  <div className="absolute top-[159px] right-1 flex h-[199px] w-[30px] flex-col items-center justify-between rounded-sm border border-[#666b70] bg-[#55595d] py-px text-[#373b3f]">
    <span className="flex w-full justify-end pr-px">
      <Svg w={8} h={7}>
        <circle cx="4" cy="3.500" r="2.500" stroke="currentColor" />
      </Svg>
    </span>
    <button type="button" aria-label="Steering wheel">
      <Svg w={24} h={24}>
        <path d="M12 2h9v10a9.500 10 0 1 1-9-10z" stroke="currentColor" />
        <circle cx="12" cy="12" r="5" stroke="currentColor" />
        <path d="M3 8l5 2M3 17l5-2M16 15l4 3" stroke="currentColor" />
      </Svg>
    </button>
    <NavCaret />
    <button type="button" aria-label="Pan">
      <Svg w={24} h={24}>
        <path d="M8 22c-2-4-5-7-6-9 1-2 3 0 5 2L4.500 6c1-2 2-1 2.500 0l2 6-0.500-9c1-2 2-1 2.500 0l1 9 1-9c1-2 2-1 2 0l0 10 2-7c1-2 2-1 2 0l-1.500 10-2.500 6z" stroke="currentColor" />
      </Svg>
    </button>
    <button type="button" aria-label="Zoom extents">
      <Svg w={24} h={24}>
        <path d="M2 2l13 13M15 2L2 15M1.500 6V1.500H6M11 1.500h4.500V6M1.500 11v4.500H6" stroke="currentColor" />
        <circle cx="16" cy="15" r="4" stroke="currentColor" />
        <path d="M19 18l4 4" stroke="currentColor" strokeWidth="2" />
      </Svg>
    </button>
    <NavCaret />
    <button type="button" aria-label="Orbit">
      <Svg w={24} h={24}>
        <path d="M10 22V7H7l5-6 5 6h-3v15z" stroke="currentColor" />
        <path d="M7 9c-8 3-6 8 5 8s13-4 9-7M3 14l3 5 3-4" stroke="currentColor" />
      </Svg>
    </button>
    <NavCaret />
    <button type="button" aria-label="Show motion">
      <Svg w={24} h={24}>
        <path d="M1.500 1.500h5v6h-5zM9.500 1.500h5v6h-5zM17.500 1.500h5v6h-5zM1.500 10.500h15v12h-15z" stroke="currentColor" />
        <path d="M5 12.500l7 4-7 4z" fill="currentColor" />
      </Svg>
    </button>
    <span className="flex w-full justify-end pr-px">
      <Svg w={8} h={8}>
        <circle cx="4" cy="4" r="3" stroke="currentColor" />
        <path d="M2.500 4h3" stroke="currentColor" />
      </Svg>
    </span>
  </div>
);

const Viewport: React.FC = () => (
  <main className="flex min-h-0 flex-1 border-t-2 border-[#6b7478] bg-[#212830]">
    <div className="relative min-w-0 flex-1">
      <svg viewBox="0 156 1273 499" className="block h-full w-full" preserveAspectRatio="xMinYMin meet" fill="none" role="img" aria-label="Drawing1">
        <Dome levels={LEFT_DOME} axis={371.5} />
        <Dome levels={RIGHT_DOME} axis={906.5} />
        <path d="M850 278.500H964" stroke="#b4bab4" strokeWidth="2" />
        <path d="M891 341.500h29M927 341.500h29M923.500 309v30M923.500 345v29" stroke="#c9ccd0" />
        <path d="M920.500 339.500h6v5h-6z" stroke="#f4f4f4" />
      </svg>

      <p className="absolute top-[6px] left-[3px] text-[11px] text-[#dfe2e5]">[−][Top][2D Wireframe]</p>

      <div className="absolute top-2 right-[10px] flex flex-col items-center gap-[11px]">
        <svg width="100" height="102" viewBox="-4 -5 100 102" role="img" aria-label="ViewCube" fontFamily="Liberation Sans, sans-serif">
          <circle cx="46" cy="46" r="38" fill="none" stroke="#454c54" strokeWidth="8" />
          <path d="M28.500 28.500h35v35h-35z" fill="#b3b5b7" stroke="#c3c5c7" />
          <path d="M35 35h22v22H35z" fill="#a6a8aa" />
          <text x="46" y="49" textAnchor="middle" fontSize="8" fontWeight="700" fill="#3c4046">TOP</text>
          <g fontSize="15" fontWeight="700" fill="#a4a8ac" textAnchor="middle">
            <text x="46" y="12">N</text>
            <text x="46" y="91">S</text>
            <text x="7" y="51">W</text>
            <text x="85" y="51">E</text>
          </g>
        </svg>
        <button
          type="button"
          className="flex h-4 w-[44px] items-center justify-between rounded-sm border border-[#9a9da6] bg-[#868a95] px-[3px] text-[11px] text-[#4a4f59]"
        >
          WCS
          <Svg w={8} h={5}>
            <path d="M1 1h6L4 4z" stroke="#b9bcc4" />
          </Svg>
        </button>
      </div>

      <NavBar />

      <svg width="76" height="80" viewBox="0 -8 76 80" className="absolute bottom-2 left-2" fill="none" aria-hidden="true">
        <path d="M5.500 19v47M5.500 66.500H53M1.500 62.500h8v8h-8z" stroke="#cfd4d9" />
        <g fontSize="18" fontWeight="300" fill="#eef1f4" textAnchor="middle">
          <text x="13" y="16">Y</text>
          <text x="63" y="65">X</text>
        </g>
      </svg>
    </div>
    <div className="w-[7px] shrink-0 border-r border-[#3d6f80] bg-gradient-to-b from-[#c5dff5] to-[#9dbce8]" />
  </main>
);

const StatusGroup: React.FC<{ children: React.ReactNode; width: string }> = ({ children, width }) => (
  <div className={clsx('flex h-full shrink-0 items-center justify-around border border-[#757575] bg-[#525252]', width)}>{children}</div>
);

const StatusIcon: React.FC<{ name: string; children: React.ReactNode }> = ({ name, children }) => (
  <button type="button" aria-label={name}>
    <Svg>{children}</Svg>
  </button>
);

const StatusCaret: React.FC = () => (
  <button type="button" aria-label="More" className="flex h-5 w-3 items-center justify-center">
    <Caret size="md" />
  </button>
);

const person = <path d="M9 2h2l1 4v4c3 2 5 4 6 8l-5-2-3-3-3 3-5 2c1-4 3-6 6-8V6z" />;

const StatusBar: React.FC = () => (
  <footer className="flex h-[27px] items-start border-t border-[#4e555c] bg-[#3b3b3b]">
    <div className="flex items-start pl-3 text-[#a9a9a9]">
      <button
        type="button"
        className="h-4 w-[54px] bg-gradient-to-b from-[#5a5a5a] to-[#8c8c8c] font-bold text-white [clip-path:polygon(0_0,100%_0,90%_85%,86%_100%,13%_100%,9%_85%)]"
      >
        Model
      </button>
      <button type="button" className="h-4 w-[60px] bg-[#5a5a5a] [clip-path:polygon(0_0,100%_0,96%_85%,93%_100%,6%_100%,3%_85%)]">
        Layout1
      </button>
      <button type="button" className="ml-px h-4 w-[62px] bg-[#5a5a5a] [clip-path:polygon(0_0,100%_0,94%_85%,90%_100%,6%_100%,3%_85%)]">
        Layout2
      </button>
      <button
        type="button"
        aria-label="New layout"
        className="flex h-[15px] w-[22px] items-center justify-center bg-[#5a5a5a] [clip-path:polygon(12%_0,100%_0,90%_85%,80%_100%,10%_100%,0_85%)]"
      >
        <Svg w={8} h={8}>
          <path d="M4 0.500v7M0.500 4h7" stroke="#d5d5d5" strokeWidth="1.500" />
        </Svg>
      </button>
    </div>

    <div className="ml-auto flex h-[25px] items-center text-[#e6e6e6]">
      <StatusGroup width="w-[46px]">
        <button type="button">MODEL</button>
      </StatusGroup>
      <StatusGroup width="w-[62px]">
        <StatusIcon name="Grid">
          <path d="M6.500 3v14M9.500 3v14M12.500 3v14M15.500 3v14M3 6.500h14M3 10.500h14M3 14.500h14" stroke="#d0d0d0" strokeDasharray="2 1" />
        </StatusIcon>
        <StatusIcon name="Snap">
          <path d="M4 4.500h13M4 7.500h13M4 10.500h13M4 13.500h13M4 16.500h13" stroke="#c4c4c4" strokeDasharray="1 2" />
        </StatusIcon>
        <StatusCaret />
      </StatusGroup>
      <StatusGroup width="w-[99px]">
        <StatusIcon name="Ortho">
          <path d="M5 3v13h12M5 12h4v4" stroke="#2b8cff" strokeWidth="1.500" />
        </StatusIcon>
        <StatusIcon name="Polar">
          <circle cx="9" cy="10" r="6" stroke="#d0d0d0" strokeWidth="1.300" />
          <path d="M9 10h8M9 10V6M14 7.500l4 2.500-4 2.500" stroke="#d0d0d0" strokeWidth="1.300" />
        </StatusIcon>
        <StatusCaret />
        <StatusIcon name="Isometric drafting">
          <path d="M9.500 2v9M3 3l15 15M10.500 11v7" stroke="#c4c4c4" strokeWidth="1.300" />
        </StatusIcon>
        <StatusCaret />
      </StatusGroup>
      <StatusGroup width="w-[61px]">
        <StatusIcon name="Object snap tracking">
          <path d="M18 15.500H4L15 5" stroke="#2b8cff" strokeWidth="1.500" />
          <circle cx="11" cy="11" r="1.500" fill="#2b8cff" />
        </StatusIcon>
        <StatusIcon name="Object snap">
          <path d="M5.500 5.500h11v11h-11z" stroke="#2b8cff" strokeWidth="1.500" />
          <path d="M3.500 3.500h4v4h-4z" fill="#35d04a" stroke="#0b5a1c" />
        </StatusIcon>
        <StatusCaret />
      </StatusGroup>
      <StatusGroup width="w-[101px]">
        <StatusIcon name="Annotation visibility">
          <g fill="#2b9bff">{person}</g>
          <circle cx="14" cy="5" r="2.500" stroke="#2b9bff" fill="#525252" />
        </StatusIcon>
        <StatusIcon name="Auto scale">
          <g fill="#cfcfcf">{person}</g>
          <path d="M15 2l-2 3h4l-4 4" stroke="#e6e6e6" />
        </StatusIcon>
        <StatusIcon name="Annotation scale">
          <g fill="#cfcfcf">{person}</g>
        </StatusIcon>
        <button type="button" className="flex items-center gap-1">
          1:1
          <Caret size="md" />
        </button>
      </StatusGroup>
      <StatusGroup width="w-[38px]">
        <button type="button" aria-label="Workspace">
          <Svg w={14} h={14}>
            <Settings size={14} color="#cfcfcf" fill="#cfcfcf" strokeWidth={3} />
            <circle cx="7" cy="7" r="2" fill="#525252" />
          </Svg>
        </button>
        <StatusCaret />
      </StatusGroup>
      <StatusGroup width="w-6">
        <StatusIcon name="Annotation monitor">
          <path d="M10 4v12M4 10h12" stroke="#dcdcdc" strokeWidth="1.500" />
        </StatusIcon>
      </StatusGroup>
      <StatusGroup width="w-[25px]">
        <StatusIcon name="Isolate objects">
          <path d="M3.500 3.500h6v6h-6zM8.500 11l3.500 6H5z" stroke="#cfcfcf" strokeWidth="1.200" />
          <circle cx="14" cy="9.500" r="3" stroke="#cfcfcf" strokeWidth="1.200" />
        </StatusIcon>
      </StatusGroup>
      <span className="w-px" />
      <StatusGroup width="w-[25px]">
        <StatusIcon name="Hardware acceleration">
          <circle cx="10" cy="10" r="8" fill="#1265bd" />
          <path d="M10 11l4-4" stroke="#0a2c58" strokeWidth="1.500" />
          <path d="M5 13a6 6 0 0 0 10 0" stroke="#0d4f98" />
        </StatusIcon>
      </StatusGroup>
      <StatusGroup width="w-12">
        <StatusIcon name="Clean screen">
          <path d="M3.500 4.500h14v11h-14z" stroke="#e0e0e0" strokeWidth="1.300" />
          <path d="M11 10l4-4M12 6h3.500v3M9.500 10.500L6 14M6 11v3h3" stroke="#e0e0e0" strokeWidth="1.300" />
        </StatusIcon>
        <StatusIcon name="Customization">
          <path d="M3 5h14M3 10h14M3 15h14" stroke="#dcdcdc" strokeWidth="1.500" />
        </StatusIcon>
      </StatusGroup>
    </div>
  </footer>
);

interface TaskProps {
  name: string;
  width?: string;
  running?: boolean;
  active?: boolean;
  children: React.ReactNode;
}

const Task: React.FC<TaskProps> = ({ name, width = 'w-[46px]', running, active, children }) => (
  <button
    type="button"
    aria-label={name}
    className={clsx('relative flex h-full items-center justify-center', width, active && 'bg-[#3a3c40]')}
  >
    {children}
    {(running || active) && <span className={clsx('absolute bottom-0 h-[2px] bg-[#76b9ed]', active ? 'inset-x-0' : 'inset-x-1')} />}
  </button>
);

const Taskbar: React.FC = () => (
  <div className="flex h-[38px] items-center bg-black text-white">
    <Task name="Start" width="w-[45px]">
      <Svg w={16} h={16}>
        <path d="M0 2.300L6.500 1.400v6.200H0zM7.300 1.300L16 0v7.600H7.300zM0 8.400h6.500v6.200L0 13.700zM7.300 8.400H16V16l-8.700-1.300z" fill="#fff" />
      </Svg>
    </Task>
    <Task name="Search" width="w-[45px]">
      <Svg w={16} h={16}>
        <circle cx="10" cy="6" r="5" stroke="#fff" strokeWidth="1.200" />
        <path d="M6.500 9.500L0.500 15.500" stroke="#fff" strokeWidth="1.300" />
      </Svg>
    </Task>
    <Task name="Task View" width="w-[46px]">
      <Svg w={16} h={16}>
        <path d="M1.500 4.500h8v7h-8zM1 2.500h9M1 13.500h9M1.500 0.500v3M9.500 0.500v3M1.500 13v3M9.500 13v3M13.500 1v14" stroke="#fff" />
        <path d="M12 5h3v3h-3z" fill="#fff" />
      </Svg>
    </Task>
    <Task name="Edge">
      <FaEdgeLegacy size={20} className="text-[#0f7fdc]" />
    </Task>
    <Task name="File Explorer" running>
      <Svg w={22} h={20}>
        <path d="M1 2h8l2 2h10v13H1z" fill="#f3cf66" />
        <path d="M1 6h20v11H1z" fill="#fde9a0" />
        <path d="M4 11h14v7h-4v-3H8v3H4z" fill="#3f9fdb" />
      </Svg>
    </Task>
    <Task name="Calculator">
      <Svg w={18} h={22}>
        <path d="M0.500 0h17v22h-17z" fill="#f4f4f4" />
        <path d="M3 2.500h12v4H3z" fill="#111" />
        <path d="M3 10h12M3 14h12M3 18h12" stroke="#111" strokeWidth="2" strokeDasharray="2.200 1" />
      </Svg>
    </Task>
    <Task name="Chrome" running>
      <Svg w={22} h={22}>
        <circle cx="11" cy="11" r="10.500" fill="#fbc116" />
        <path d="M11 11L1.900 5.750A10.500 10.500 0 0 1 20.100 5.750z" fill="#e33b2e" />
        <path d="M11 11L1.900 5.750A10.500 10.500 0 0 0 11 21.500l4-7.500z" fill="#2da94f" />
        <path d="M11 6h9.500" stroke="#e33b2e" strokeWidth="1.500" />
        <circle cx="11" cy="11" r="5" fill="#fff" />
        <circle cx="11" cy="11" r="3.900" fill="#4285f4" />
      </Svg>
    </Task>
    <Task name="Snipping Tool">
      <Svg w={24} h={22}>
        <ellipse cx="11" cy="10" rx="10" ry="6" transform="rotate(-18 11 10)" fill="#b9706f" />
        <ellipse cx="12" cy="7.500" rx="10" ry="5.500" transform="rotate(-18 12 7.500)" fill="#f1eef0" stroke="#c9453f" />
        <path d="M14 10l5 7M20 10l-4 7" stroke="#4ea3dd" strokeWidth="1.500" />
        <circle cx="15" cy="18.500" r="2" stroke="#2e86c9" strokeWidth="1.300" />
        <circle cx="20.500" cy="16.500" r="2" stroke="#2e86c9" strokeWidth="1.300" />
      </Svg>
    </Task>
    <Task name="AutoCAD" active>
      <span className="flex size-[22px] items-center justify-center bg-[#f7e9e7]">
        <AcadLogo size={18} />
      </span>
    </Task>

    <div className="ml-auto flex h-full items-center">
      <button type="button" aria-label="People" className="flex w-[34px] justify-center">
        <Svg w={16} h={16}>
          <circle cx="10.500" cy="4" r="2.800" stroke="#fff" strokeWidth="1.200" />
          <circle cx="5" cy="9" r="2.300" stroke="#fff" strokeWidth="1.200" />
          <path d="M1 15.500c0-5 7-5 7.500 0M8 8.500c3-2 6 0 6.500 3" stroke="#fff" strokeWidth="1.200" />
        </Svg>
      </button>
      <button type="button" aria-label="Show hidden icons" className="ml-[6px] flex w-[22px] justify-center">
        <Svg w={12} h={8}>
          <path d="M1 6.500l5-5 5 5" stroke="#fff" strokeWidth="1.300" />
        </Svg>
      </button>
      <button type="button" aria-label="Battery" className="flex w-[23px] justify-center">
        <Svg w={14} h={10}>
          <path d="M0.500 1.500h11v7h-11zM12.500 3.500v3" stroke="#fff" strokeWidth="1.200" />
          <path d="M2.500 3.500h4v3h-4z" fill="#fff" />
        </Svg>
      </button>
      <button type="button" aria-label="Volume" className="flex w-[23px] justify-center">
        <Svg w={16} h={14}>
          <path d="M0.500 5v4h2.500l3.500 3V2L3 5z" stroke="#fff" />
          <path d="M8.500 5c1 1 1 3 0 4M10.800 3c2 2.500 2 5.500 0 8M13 1.500c3 3.500 3 7.500 0 11" stroke="#fff" />
        </Svg>
      </button>
      <button type="button" aria-label="Network" className="flex w-[23px] justify-center">
        <Svg w={14} h={14}>
          <path d="M1 13C1 6 6 1.500 13 1.500M4 13c0-5 4-8.500 9-8.500M7 13c0-3 2.500-5.500 6-5.500M10 13c0-1.500 1-2.500 3-2.500" stroke="#d5d5d5" strokeWidth="1.200" />
          <circle cx="12" cy="12.500" r="1.300" fill="#fff" />
        </Svg>
      </button>
      <button type="button" className="w-[30px] text-center text-[11px]">
        ENG
      </button>
      <button type="button" className="w-[70px] text-center text-[11px] leading-[17px]">
        <span className="block">1:49 PM</span>
        <span className="block">29/05/2020</span>
      </button>
      <button type="button" aria-label="Notifications" className="flex h-full w-[43px] items-center border-r border-[#555] pl-[9px]">
        <span className="relative">
          <Svg w={17} h={18}>
            <path d="M0 1h15v11H9l-3 3v-3H0z" fill="#fff" />
            <path d="M2.500 4h10M2.500 6.500h10M2.500 9h6" stroke="#000" />
          </Svg>
          <span className="absolute top-[6px] left-[8px] flex size-[15px] items-center justify-center rounded-full border border-[#777] bg-[#222] text-[10px]">
            1
          </span>
        </span>
      </button>
      <span className="w-1" />
    </div>
  </div>
);

const App: React.FC = () => {
  return (
    <div className="flex h-screen min-h-[520px] flex-col overflow-hidden bg-[#212830] font-['Open_Sans','Noto_Sans',sans-serif] text-[11px] leading-4">
      <Header />
      <RibbonTabs />
      <Ribbon />
      <Viewport />
      <StatusBar />
      <Taskbar />
    </div>
  );
};

export default App;
